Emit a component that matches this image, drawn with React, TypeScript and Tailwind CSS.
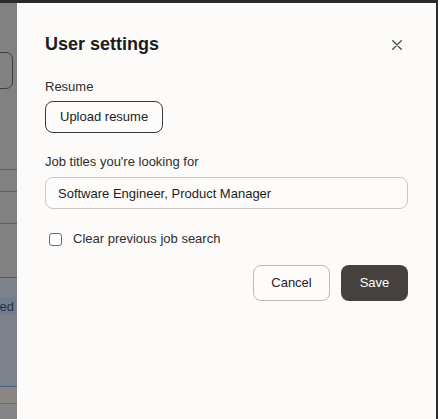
import React from "react";

function CloseIcon() {
  return (
    <svg width="10" height="10" viewBox="0 0 10 10" fill="none" className="block">
      <path d="M0.75 0.75L9.25 9.25M9.25 0.75L0.75 9.25" stroke="#4a4a4a" strokeWidth="1.4" strokeLinecap="round" />
    </svg>
  );
}

function Backdrop() {
  // dimmed page behind the settings sheet
  return (
    <div className="relative w-[17px] shrink-0 overflow-hidden flex flex-col bg-[#818181]">
      <div className="h-[49px] shrink-0" />
      <div className="h-[37px] w-[24px] -ml-[11px] shrink-0 rounded-[7px] border-[1.5px] border-[#3d3d3d]" />
      <div className="h-[80px] shrink-0" />
      <div className="h-px shrink-0 bg-[#5e5e5e]" />
      <div className="h-[21px] shrink-0" />
      <div className="h-px shrink-0 bg-[#5e5e5e]" />
      <div className="h-[31px] shrink-0" />
      <div className="h-px shrink-0 bg-[#5e5e5e]" />
      <div className="h-[53px] shrink-0" />
      <div className="h-px shrink-0 bg-[#3e5f8e]" />
      <div className="flex-col flex bg-[#7d8189] h-[108px] shrink-0">
        <div className="h-[19px] shrink-0" />
        <div className="h-[18px] w-[30px] -ml-[14px] rounded-[3px] bg-[#6f7d8e] flex items-center justify-end pr-[2px] text-[13px] leading-none text-[#243247]">
          ed
        </div>
      </div>
      <div className="h-px shrink-0 bg-[#4b6589]" />
      <div className="h-[16px] shrink-0 bg-[#8a8782]" />
      <div className="h-px shrink-0 bg-[#6c6c6c]" />
      <div className="flex-1 bg-[#858585]" />
    </div>
  );
}

export default function App() {
  return (
    <div className="w-[438px] h-[419px] flex flex-col bg-[#2b2b2b] overflow-hidden font-['Liberation_Sans',Arial,sans-serif]">
      <div className="h-[3px] shrink-0" />
      <div className="flex flex-1 min-h-0">
        <Backdrop />
        <div className="flex-1 bg-[#fcfbf9] px-[28px] pt-[29px] flex flex-col text-[#1f1f1f]">
          <div className="flex items-center justify-between h-[24px]">
            <h2 className="text-[18px] leading-[24px] font-bold text-[#1c1c1c]">User settings</h2>
            <button className="mr-[6px] mt-[1px]" aria-label="Close">
              <CloseIcon />
            </button>
          </div>

          <label className="mt-[21px] text-[13px] leading-[20px] text-[#2e2e2e]">Resume</label>
          <div className="mt-[4px]">
            <button className="h-[32px] px-[14px] rounded-[8px] border border-[#3a3a3a] bg-[#fdfcfa] text-[13px] text-[#222]">
              Upload resume
            </button>
          </div>

          <label className="mt-[19px] text-[13px] leading-[20px] text-[#2e2e2e]">Job titles you're looking for</label>
          <input
            className="mt-[5px] h-[32px] w-full rounded-[8px] border border-[#c9c8c5] bg-[#fdfcfa] px-[12px] text-[13px] text-[#1c1c1c] outline-none"
            defaultValue="Software Engineer, Product Manager"
          />

          <label className="mt-[20px] h-[20px] flex items-center gap-[11px] pl-[4px] text-[13px] text-[#2e2e2e]">
            <span className="w-[13px] h-[13px] rounded-[3px] border border-[#6e6e6e] bg-white shrink-0" />
            Clear previous job search
          </label>

          <div className="mt-[16px] flex justify-end gap-[11px]">
            <button className="h-[36px] w-[77px] rounded-[8px] border border-[#bdbcb9] bg-[#fdfcfa] text-[13px] text-[#222]">
              Cancel
            </button>
            <button className="h-[36px] w-[67px] rounded-[8px] bg-[#45423e] text-[13px] text-white">
              Save
            </button>
          </div>
        </div>
        <div className="w-[2px] shrink-0" />
      </div>
    </div>
  );
}
